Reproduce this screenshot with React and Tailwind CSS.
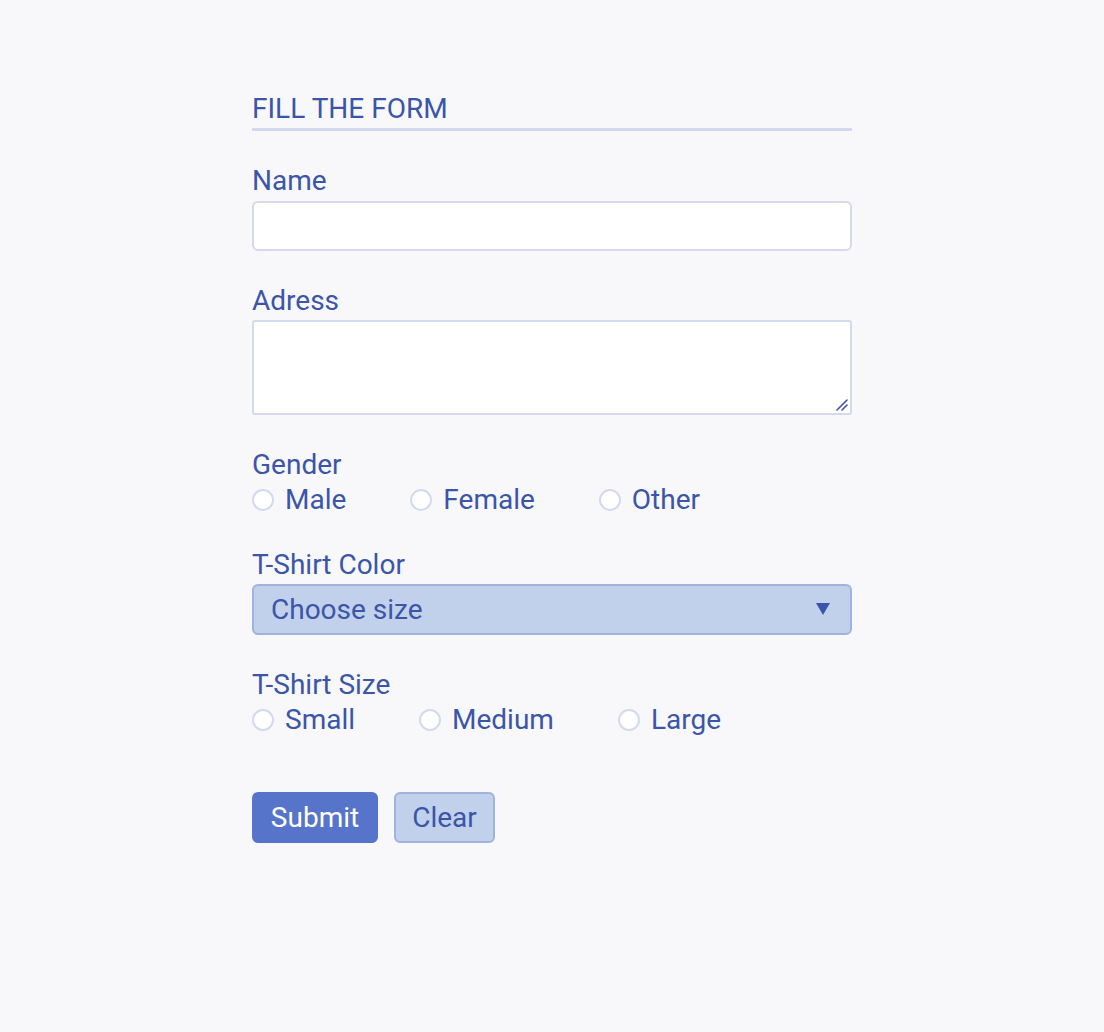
import React, { useState } from 'react';

const GENDERS = ['Male', 'Female', 'Other'];
const SIZES = ['Small', 'Medium', 'Large'];

function Radio({ name, label, checked, onChange }) {
  return (
    <label className="flex items-center mr-[64px] cursor-pointer">
      <input
        type="radio"
        name={name}
        checked={checked}
        onChange={onChange}
        className="appearance-none w-[22px] h-[22px] rounded-full border-2 border-[#d3daee] bg-white checked:bg-[#3b55a9] checked:border-[#3b55a9] m-0"
      />
      <span className="ml-[11px]">{label}</span>
    </label>
  );
}

export default function App() {
  const [gender, setGender] = useState('');
  const [size, setSize] = useState('');

  return (
    <div
      className="min-h-[1032px] bg-[#f8f8fb] text-[#3b55a9] text-[28px] leading-[32px]"
      style={{ fontFamily: 'Roboto, "Liberation Sans", sans-serif' }}
    >
      <form className="w-[600px] ml-[252px] pt-[93px]" onSubmit={(e) => e.preventDefault()}>
        <h1 className="text-[28px] leading-[32px] pb-[3px] border-b-[3px] border-[#d3d8ee] font-normal">
          FILL THE FORM
        </h1>

        <div className="mt-[33px]">
          <label className="block pt-[1px]">Name</label>
          <input
            type="text"
            className="block w-full h-[50px] mt-[4px] bg-white border-2 border-[#d3daee] rounded-[6px] px-3 outline-none"
          />
        </div>

        <div className="mt-[33px]">
          <label className="block pt-[1px]">Adress</label>
          <div className="relative mt-[3px]">
            <textarea className="block w-full h-[95px] bg-white border-2 border-[#d3daee] rounded-[3px] px-3 outline-none resize-none" />
            <svg className="absolute right-[4px] bottom-[4px] pointer-events-none" width="14" height="14" viewBox="0 0 14 14">
              <path d="M3 13 L13 3 M8 13 L13 8" stroke="#3b55a9" strokeWidth="1.6" strokeLinecap="round" />
            </svg>
          </div>
        </div>

        <div className="mt-[33px]">
          <div className="pt-[1px]">Gender</div>
          <div className="flex mt-[3px] h-[32px]">
            {GENDERS.map((g) => (
              <Radio key={g} name="gender" label={g} checked={gender === g} onChange={() => setGender(g)} />
            ))}
          </div>
        </div>

        <div className="mt-[32px]">
          <label className="block pt-[1px]">T-Shirt Color</label>
          <div className="relative mt-[3px]">
            <select className="appearance-none block w-full h-[51px] bg-[#c1d1eb] border-2 border-[#a0b3de] rounded-[6px] pl-[17px] text-[#3b55a9] outline-none">
              <option>Choose size</option>
              <option>Red</option>
              <option>Blue</option>
              <option>Green</option>
            </select>
            <svg className="absolute right-[22px] top-[19px] pointer-events-none" width="14" height="12" viewBox="0 0 14 12">
              <path d="M0 0 L14 0 L7 12 Z" fill="#3b55a9" />
            </svg>
          </div>
        </div>

        <div className="mt-[33px]">
          <div className="pt-[1px]">T-Shirt Size</div>
          <div className="flex mt-[3px] h-[32px]">
            {SIZES.map((s) => (
              <Radio key={s} name="size" label={s} checked={size === s} onChange={() => setSize(s)} />
            ))}
          </div>
        </div>

        <div className="flex gap-[16px] mt-[56px]">
          <button type="submit" className="h-[51px] w-[126px] bg-[#5674c9] text-white rounded-[6px]">
            Submit
          </button>
          <button type="reset" className="h-[51px] w-[101px] bg-[#c1d1eb] border-2 border-[#a0b3de] text-[#3b55a9] rounded-[6px]">
            Clear
          </button>
        </div>
      </form>
    </div>
  );
}
